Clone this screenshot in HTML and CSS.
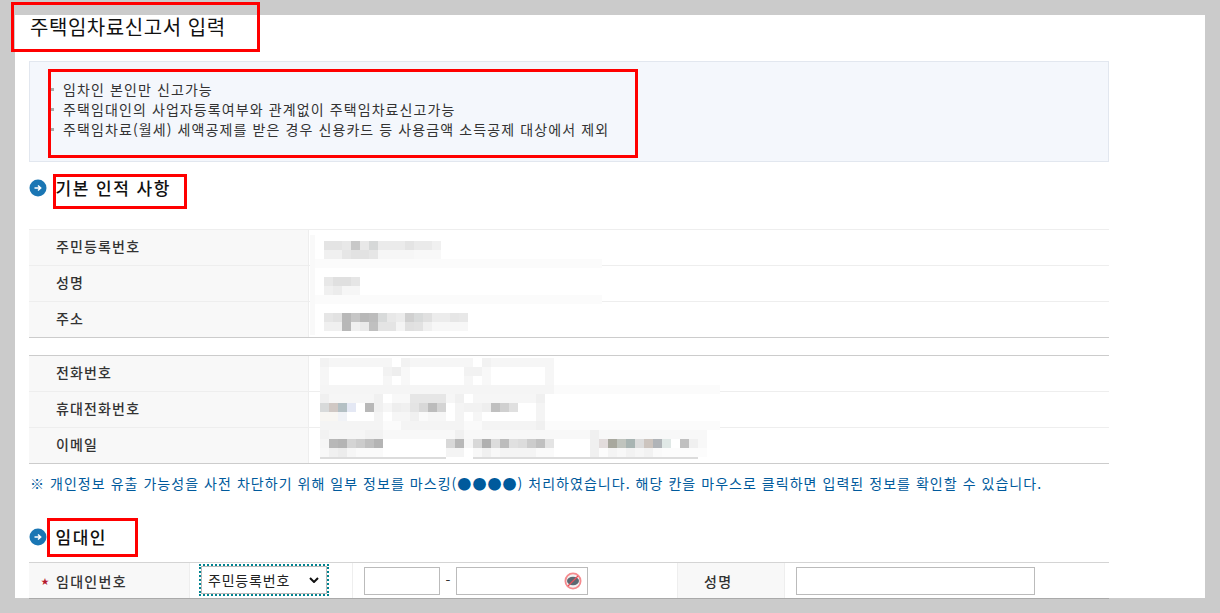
FILE: index.html
```html
<!DOCTYPE html>
<html lang="ko">
<head>
<meta charset="utf-8">
<title>주택임차료신고서 입력</title>
<link rel="stylesheet" href="styles.css">
</head>
<body>
<main class="panel">
  <h1 class="title">주택임차료신고서 입력</h1>
  <ul class="notice">
    <li>임차인 본인만 신고가능</li>
    <li>주택임대인의 사업자등록여부와 관계없이 주택임차료신고가능</li>
    <li>주택임차료(월세) 세액공제를 받은 경우 신용카드 등 사용금액 소득공제 대상에서 제외</li>
  </ul>
  <h2 class="section first"><svg class="ico" viewBox="0 0 18 18"><circle cx="9" cy="9" r="8.5" fill="#1a76b4"/><path d="M5.5 9h6M9 6.5 11.7 9 9 11.5" fill="none" stroke="#fff" stroke-width="1.5"/></svg>기본 인적 사항</h2>
  <div class="info">
    <div class="row"><div class="th">주민등록번호</div><div class="td"></div></div>
    <div class="row"><div class="th">성명</div><div class="td"></div></div>
    <div class="row"><div class="th">주소</div><div class="td"></div></div>
    <svg class="mosaic" width="300" height="107" viewBox="0 0 300 107" shape-rendering="crispEdges">
      <rect x="0" y="5" width="5" height="100" fill="#f9f9f9"/>
      <rect x="5" y="29" width="287" height="9" fill="#fbfbfb"/><rect x="5" y="65" width="287" height="9" fill="#fbfbfb"/>
      <rect x="14" y="11" width="18" height="9" fill="#e4e4e4"/><rect x="32" y="11" width="9" height="9" fill="#e8e8e8"/><rect x="41" y="11" width="9" height="9" fill="#c8c8c8"/><rect x="50" y="11" width="9" height="9" fill="#e8e8e8"/><rect x="59" y="11" width="9" height="9" fill="#d6d8d8"/><rect x="68" y="11" width="27" height="9" fill="#ebebeb"/><rect x="95" y="11" width="9" height="9" fill="#e4e4e4"/><rect x="104" y="11" width="18" height="9" fill="#eaeaea"/><rect x="122" y="11" width="9" height="9" fill="#f0f0f0"/>
      <rect x="14" y="20" width="18" height="9" fill="#f0f0f0"/><rect x="32" y="20" width="9" height="9" fill="#e6e6e6"/><rect x="41" y="20" width="18" height="9" fill="#e2e2e2"/><rect x="59" y="20" width="9" height="9" fill="#e6e6e6"/><rect x="68" y="20" width="36" height="9" fill="#f6f6f6"/><rect x="104" y="20" width="27" height="9" fill="#f8f8f8"/>
      <rect x="14" y="47" width="9" height="9" fill="#e8e8e8"/><rect x="23" y="47" width="18" height="9" fill="#e0e0e0"/><rect x="41" y="47" width="9" height="9" fill="#e6e6e6"/>
      <rect x="14" y="56" width="9" height="9" fill="#f0f0f0"/><rect x="23" y="56" width="9" height="9" fill="#ececec"/><rect x="32" y="56" width="18" height="9" fill="#f6f6f6"/>
      <rect x="14" y="83" width="9" height="9" fill="#e6e6e6"/><rect x="23" y="83" width="9" height="9" fill="#e2e2e2"/><rect x="32" y="83" width="9" height="9" fill="#b8b8b8"/><rect x="41" y="83" width="9" height="9" fill="#c6c6c6"/><rect x="50" y="83" width="9" height="9" fill="#b8b8b8"/><rect x="59" y="83" width="9" height="9" fill="#bcbcbc"/><rect x="68" y="83" width="9" height="9" fill="#d8dada"/><rect x="77" y="83" width="9" height="9" fill="#e8e8e8"/><rect x="86" y="83" width="9" height="9" fill="#ececec"/><rect x="95" y="83" width="9" height="9" fill="#d0d0d0"/><rect x="104" y="83" width="9" height="9" fill="#d8dada"/><rect x="113" y="83" width="9" height="9" fill="#e0e0e0"/><rect x="122" y="83" width="18" height="9" fill="#ececec"/><rect x="140" y="83" width="9" height="9" fill="#e6e6e6"/><rect x="149" y="83" width="9" height="9" fill="#e8e8e8"/>
      <rect x="14" y="92" width="18" height="9" fill="#f0f0f0"/><rect x="32" y="92" width="9" height="9" fill="#b8b8b8"/><rect x="41" y="92" width="9" height="9" fill="#f0f0f0"/><rect x="50" y="92" width="9" height="9" fill="#eaeaea"/><rect x="59" y="92" width="9" height="9" fill="#c0c0c0"/><rect x="68" y="92" width="18" height="9" fill="#e4e4e4"/><rect x="86" y="92" width="9" height="9" fill="#f4f4f4"/><rect x="95" y="92" width="9" height="9" fill="#e0e0e0"/><rect x="104" y="92" width="9" height="9" fill="#e2e2e2"/><rect x="113" y="92" width="9" height="9" fill="#f0f0f0"/><rect x="122" y="92" width="36" height="9" fill="#f7f7f7"/>
    </svg>
  </div>
  <div class="info second">
    <div class="row"><div class="th">전화번호</div><div class="td"></div></div>
    <div class="row"><div class="th">휴대전화번호</div><div class="td"></div></div>
    <div class="row"><div class="th">이메일</div><div class="td"></div></div>
    <svg class="mosaic" width="410" height="105" viewBox="0 0 410 105" shape-rendering="crispEdges">
      <rect x="10" y="2" width="9" height="9" fill="#f2f2f2"/><rect x="19" y="2" width="63" height="9" fill="#f6f6f6"/><rect x="91" y="2" width="9" height="9" fill="#f2f2f2"/><rect x="100" y="2" width="63" height="9" fill="#f6f6f6"/><rect x="172" y="2" width="9" height="9" fill="#f2f2f2"/><rect x="181" y="2" width="63" height="9" fill="#f6f6f6"/>
      <rect x="10" y="11" width="9" height="18" fill="#f6f6f6"/><rect x="73" y="11" width="9" height="9" fill="#f2f2f2"/><rect x="82" y="11" width="9" height="9" fill="#eeeeee"/><rect x="73" y="20" width="9" height="9" fill="#f6f6f6"/><rect x="91" y="11" width="9" height="18" fill="#f8f8f8"/><rect x="154" y="11" width="18" height="9" fill="#f2f2f2"/><rect x="154" y="20" width="9" height="9" fill="#f6f6f6"/><rect x="172" y="11" width="9" height="18" fill="#f8f8f8"/><rect x="235" y="11" width="9" height="18" fill="#f6f6f6"/>
      <rect x="10" y="29" width="234" height="9" fill="#f5f5f5"/><rect x="244" y="29" width="166" height="9" fill="#fbfbfb"/>
      <rect x="10" y="38" width="9" height="9" fill="#f0f0f0"/><rect x="19" y="38" width="45" height="9" fill="#f6f6f6"/><rect x="64" y="38" width="9" height="9" fill="#f0f0f0"/><rect x="82" y="38" width="18" height="9" fill="#f8f8f8"/><rect x="100" y="38" width="36" height="9" fill="#e6e6e6"/><rect x="136" y="38" width="9" height="9" fill="#f6f6f6"/><rect x="145" y="38" width="9" height="9" fill="#f0f0f0"/><rect x="163" y="38" width="63" height="9" fill="#f6f6f6"/><rect x="226" y="38" width="9" height="9" fill="#f0f0f0"/>
      <rect x="10" y="47" width="9" height="9" fill="#d8dada"/><rect x="19" y="47" width="9" height="9" fill="#d0c8c4"/><rect x="28" y="47" width="9" height="9" fill="#b4c0c4"/><rect x="37" y="47" width="9" height="9" fill="#e4e8f4"/><rect x="55" y="47" width="9" height="9" fill="#b8b8b8"/><rect x="64" y="47" width="9" height="9" fill="#f0f0f0"/><rect x="73" y="47" width="9" height="9" fill="#f6f6f6"/><rect x="82" y="47" width="9" height="9" fill="#eeeeee"/><rect x="91" y="47" width="9" height="9" fill="#f0f0f0"/><rect x="100" y="47" width="9" height="9" fill="#e4e4e4"/><rect x="109" y="47" width="9" height="9" fill="#d8d8d8"/><rect x="118" y="47" width="9" height="9" fill="#bcbcbc"/><rect x="127" y="47" width="9" height="9" fill="#d4d4d4"/><rect x="145" y="47" width="9" height="9" fill="#f4f4f4"/><rect x="154" y="47" width="18" height="9" fill="#f2f2f2"/><rect x="172" y="47" width="9" height="9" fill="#eeeeee"/><rect x="181" y="47" width="9" height="9" fill="#c0c0c0"/><rect x="190" y="47" width="9" height="9" fill="#d0d0d0"/><rect x="199" y="47" width="9" height="9" fill="#e0e0e0"/><rect x="226" y="47" width="9" height="9" fill="#f4f4f4"/>
      <rect x="10" y="56" width="18" height="9" fill="#f8f6f2"/><rect x="28" y="56" width="9" height="9" fill="#f0f2f6"/><rect x="64" y="56" width="9" height="9" fill="#f4f4f4"/><rect x="82" y="56" width="18" height="9" fill="#f6f6f6"/><rect x="100" y="56" width="9" height="9" fill="#f0f0f0"/><rect x="109" y="56" width="9" height="9" fill="#fafafa"/><rect x="118" y="56" width="18" height="9" fill="#f6f6f6"/><rect x="145" y="56" width="9" height="9" fill="#f4f4f4"/><rect x="163" y="56" width="9" height="9" fill="#f6f6f6"/><rect x="226" y="56" width="9" height="9" fill="#f4f4f4"/>
      <rect x="10" y="65" width="63" height="9" fill="#f4f4f4"/><rect x="73" y="65" width="18" height="9" fill="#fbfbfb"/><rect x="91" y="65" width="63" height="9" fill="#f4f4f4"/><rect x="154" y="65" width="18" height="9" fill="#fafafa"/><rect x="172" y="65" width="54" height="9" fill="#f4f4f4"/><rect x="226" y="65" width="9" height="9" fill="#f0f0f0"/><rect x="235" y="65" width="175" height="9" fill="#fbfbfb"/>
      <rect x="10" y="74" width="9" height="9" fill="#f2f2f2"/><rect x="19" y="74" width="36" height="9" fill="#f6f6f6"/><rect x="55" y="74" width="18" height="9" fill="#f2f2f2"/><rect x="73" y="74" width="72" height="9" fill="#f8f8f8"/><rect x="145" y="74" width="9" height="9" fill="#f0f0f0"/><rect x="154" y="74" width="126" height="9" fill="#f8f8f8"/><rect x="280" y="74" width="9" height="9" fill="#f0f0f0"/><rect x="289" y="74" width="108" height="9" fill="#f8f8f8"/>
      <rect x="10" y="83" width="9" height="9" fill="#f6f6f6"/><rect x="19" y="83" width="9" height="9" fill="#b8b8b8"/><rect x="28" y="83" width="9" height="9" fill="#b4b4b4"/><rect x="37" y="83" width="9" height="9" fill="#d4d4d4"/><rect x="46" y="83" width="9" height="9" fill="#cccccc"/><rect x="55" y="83" width="9" height="9" fill="#c0c0c0"/><rect x="64" y="83" width="9" height="9" fill="#b4b4b4"/><rect x="136" y="83" width="9" height="9" fill="#d8d8d8"/><rect x="145" y="83" width="9" height="9" fill="#b8b8b8"/><rect x="154" y="83" width="9" height="9" fill="#f6f6f6"/><rect x="163" y="83" width="9" height="9" fill="#d8d8d8"/><rect x="172" y="83" width="9" height="9" fill="#b0b0b0"/><rect x="181" y="83" width="9" height="9" fill="#dcdcdc"/><rect x="190" y="83" width="9" height="9" fill="#bcbcbc"/><rect x="199" y="83" width="9" height="9" fill="#e0e0e0"/><rect x="208" y="83" width="9" height="9" fill="#dcdcdc"/><rect x="217" y="83" width="9" height="9" fill="#cccccc"/><rect x="226" y="83" width="9" height="9" fill="#c0c0c0"/><rect x="235" y="83" width="9" height="9" fill="#e4e4e4"/><rect x="280" y="83" width="9" height="9" fill="#f0f0f0"/><rect x="289" y="83" width="9" height="9" fill="#e2dcdc"/><rect x="298" y="83" width="9" height="9" fill="#a8a89e"/><rect x="307" y="83" width="9" height="9" fill="#c0c4be"/><rect x="316" y="83" width="9" height="9" fill="#a8b4b2"/><rect x="325" y="83" width="9" height="9" fill="#dcdcdc"/><rect x="334" y="83" width="9" height="9" fill="#ccc4be"/><rect x="343" y="83" width="9" height="9" fill="#b0b4b8"/><rect x="352" y="83" width="9" height="9" fill="#e0e8e6"/><rect x="370" y="83" width="9" height="9" fill="#c0c0c0"/><rect x="379" y="83" width="9" height="9" fill="#f0f0f0"/><rect x="388" y="83" width="9" height="9" fill="#f8f8f8"/>
      <rect x="10" y="92" width="9" height="9" fill="#f8f8f8"/><rect x="19" y="92" width="9" height="9" fill="#f0f0f0"/><rect x="28" y="92" width="9" height="9" fill="#ececec"/><rect x="37" y="92" width="9" height="9" fill="#f6f6f6"/><rect x="46" y="92" width="27" height="9" fill="#fafafa"/><rect x="136" y="92" width="18" height="9" fill="#f4f4f4"/><rect x="163" y="92" width="9" height="9" fill="#f8f8f8"/><rect x="172" y="92" width="9" height="9" fill="#f0f0f0"/><rect x="181" y="92" width="9" height="9" fill="#f8f8f8"/><rect x="190" y="92" width="36" height="9" fill="#f4f4f4"/><rect x="226" y="92" width="18" height="9" fill="#fafafa"/><rect x="280" y="92" width="9" height="9" fill="#f0f0f0"/><rect x="289" y="92" width="9" height="9" fill="#fcfcfc"/><rect x="298" y="92" width="9" height="9" fill="#f4f4f4"/><rect x="307" y="92" width="9" height="9" fill="#f8f8f8"/><rect x="316" y="92" width="9" height="9" fill="#f2f2f2"/><rect x="325" y="92" width="9" height="9" fill="#f6f6f6"/><rect x="334" y="92" width="9" height="9" fill="#f2f2f2"/><rect x="343" y="92" width="9" height="9" fill="#fafafa"/><rect x="352" y="92" width="45" height="9" fill="#fcfcfc"/>
      <rect x="10" y="101" width="126" height="2" fill="#dcdcdc"/><rect x="163" y="101" width="225" height="2" fill="#dcdcdc"/>
    </svg>
  </div>
  <p class="note">※ 개인정보 유출 가능성을 사전 차단하기 위해 일부 정보를 마스킹(●●●●) 처리하였습니다. 해당 칸을 마우스로 클릭하면 입력된 정보를 확인할 수 있습니다.</p>
  <h2 class="section"><svg class="ico" viewBox="0 0 18 18"><circle cx="9" cy="9" r="8.5" fill="#1a76b4"/><path d="M5.5 9h6M9 6.5 11.7 9 9 11.5" fill="none" stroke="#fff" stroke-width="1.5"/></svg>임대인</h2>
  <div class="form-row">
    <div class="lab lab-id"><span class="req">★</span>임대인번호</div>
    <div class="sel-cell"><select class="sel"><option>주민등록번호</option></select></div>
    <div class="num-cell">
      <input class="inp short" type="text">
      <span class="dash">-</span>
      <span class="pw">
        <input class="inp long" type="text">
        <svg class="eye" viewBox="0 0 18 18"><circle cx="9" cy="9" r="7.6" fill="#f2f2f2" stroke="#f58a8e" stroke-width="1.8"/><ellipse cx="9" cy="9" rx="6" ry="4.2" fill="#5c6872"/><path d="M4 14 14 4" stroke="#e8505a" stroke-width="1.3"/></svg>
      </span>
    </div>
    <div class="lab lab-name">성명</div>
    <div class="name-cell"><input class="inp name" type="text"></div>
  </div>
</main>
<div class="mark m1"></div>
<div class="mark m2"></div>
<div class="mark m3"></div>
<div class="mark m4"></div>
</body>
</html>
```
FILE: styles.css
```css
* { box-sizing: border-box; }
html, body { margin: 0; padding: 0; height: 100%; overflow: hidden; }
body {
  background: #cbcbcb;
  padding: 15px 15px 0 15px;
  font-family: "Noto Sans CJK KR", "Noto Sans", sans-serif;
  color: #333;
  position: relative;
}
.panel { background: #fff; height: 583px; padding: 0 96px 0 14px; }
.title { margin: 0; height: 46px; padding-left: 1px; font-size: 20px; line-height: 24px; font-weight: 400; color: #111; letter-spacing: .55px; }
.notice {
  margin: 0; height: 101px; padding: 17px 0 0 20px; list-style: none;
  background: #f4f7fc; border: 1px solid #e2e7ef; font-size: 14px; line-height: 20px; color: #333; letter-spacing: 1.1px;
}
.notice li { position: relative; padding-left: 13px; }
.notice li::before { content: ""; position: absolute; left: 1px; top: 9px; width: 3px; height: 3px; background: #aaa; }
.section { margin: 0; display: flex; align-items: center; gap: 8.5px; font-size: 17px; font-weight: 500; color: #111; height: 24px; line-height: 24px; letter-spacing: 1.5px; }
.section.first { margin-top: 14px; margin-bottom: 29px; }
.ico { width: 18px; height: 18px; flex: none; }
.info { position: relative; border-top: 1px solid #eee; border-bottom: 1px solid #ccc; }
.second { margin-top: 17px; border-top-color: #ccc; }
.row { display: flex; height: 36px; border-top: 1px solid #eee; }
.row:first-child { border-top: 0; height: 35px; }
.th { width: 280px; flex: none; padding-left: 27px; background: #f8f8f8; font-size: 14px; font-weight: 500; line-height: 33px; border-right: 1px solid #eee; color: #333; letter-spacing: 1.15px; }
.td { flex: 1; }
.mosaic { position: absolute; left: 281px; top: 0; }
.note { margin: 8px 0 0 1px; height: 22px; font-size: 14px; line-height: 22px; color: #005a9c; white-space: nowrap; letter-spacing: 1.04px; }
.section:not(.first) { margin-top: 31px; }
.form-row { display: flex; height: 37px; margin-top: 13px; border-top: 1px solid #d4d4d4; border-bottom: 1px solid #aaa; font-size: 14px; }
.lab { background: #f8f8f8; font-weight: 500; display: flex; align-items: center; color: #333; height: 35px; letter-spacing: 1.3px; }
.lab-id { width: 161px; padding-left: 12px; border-right: 1px solid #eee; }
.req { color: #b5182c; font-size: 8px; width: 15px; flex: none; letter-spacing: 0; }
.sel-cell { width: 163px; padding: 3px 0 0 11px; border-right: 1px solid #eee; }
.sel {
  appearance: none; width: 126px; height: 28px;
  font: 14px "Noto Sans CJK KR", sans-serif; letter-spacing: .8px; color: #222;
  background: #fff url("data:image/svg+xml,%3Csvg xmlns='http://www.w3.org/2000/svg' width='10' height='6'%3E%3Cpath d='M1 1l4 4 4-4' fill='none' stroke='%23111' stroke-width='2'/%3E%3C/svg%3E") no-repeat right 7px center;
  border: 1px solid #bbb; outline: 2px dotted #00838f; outline-offset: 0; padding: 0 0 0 6px; border-radius: 0;
}
.num-cell { width: 324px; display: flex; align-items: flex-start; padding: 4px 0 0 11px; }
.inp { height: 28px; border: 1px solid #bbb; background: #fff; padding: 0; display: block; }
.short { width: 76px; }
.dash { width: 16px; text-align: center; line-height: 26px; }
.pw { position: relative; display: block; }
.long { width: 132px; }
.eye { position: absolute; left: 108px; top: 5px; width: 18px; height: 18px; }
.lab-name { width: 108px; padding-left: 26px; border-left: 1px solid #eee; border-right: 1px solid #eee; }
.name-cell { flex: 1; padding: 4px 0 0 11px; }
.name { width: 239px; }
.mark { position: absolute; border: 3px solid #f00; pointer-events: none; }
.m1 { left: 11px; top: 2px; width: 249px; height: 50px; }
.m2 { left: 48px; top: 69px; width: 590px; height: 89px; }
.m3 { left: 53px; top: 174px; width: 134px; height: 35px; }
.m4 { left: 47px; top: 518px; width: 91px; height: 39px; }
```
